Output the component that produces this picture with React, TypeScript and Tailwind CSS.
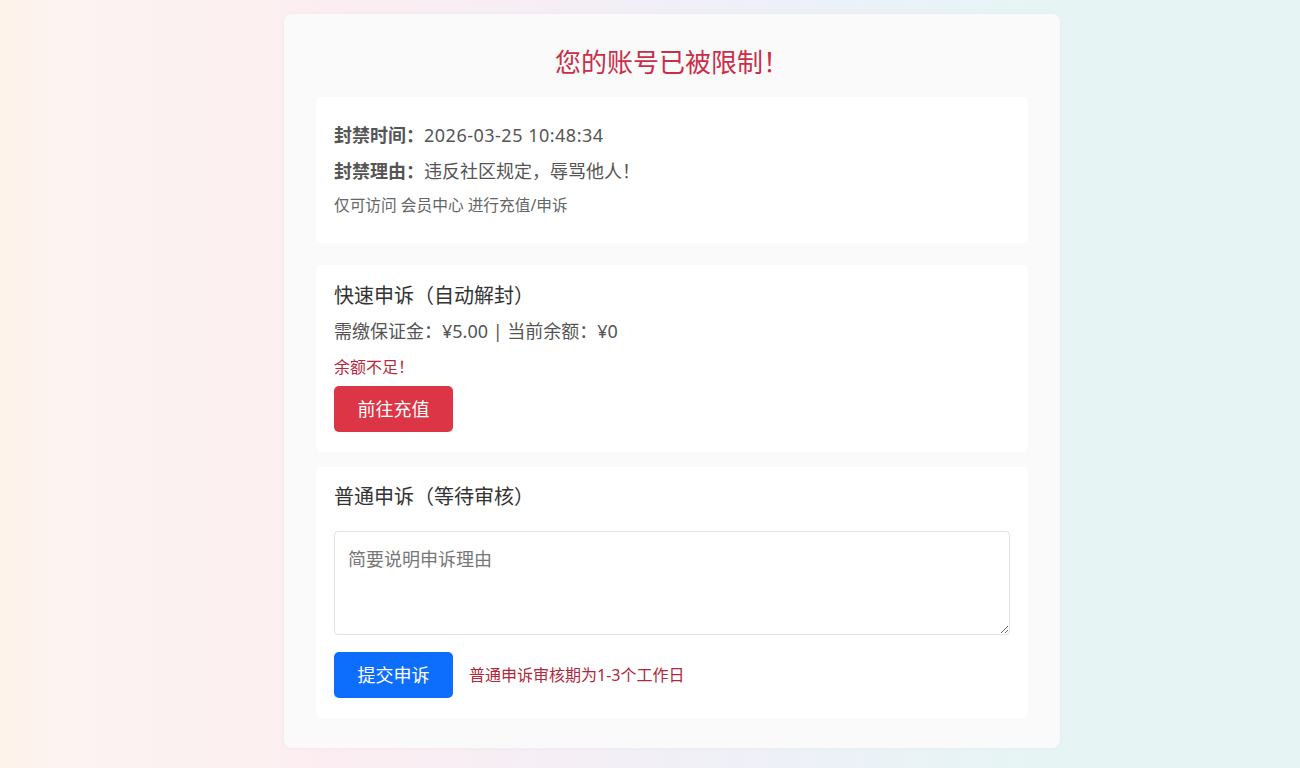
import React from "react";

export default function App() {
  const font = {
    fontFamily:
      '"Segoe UI", "Noto Sans", "Noto Sans CJK SC", "Microsoft YaHei", sans-serif',
  };
  return (
    <div
      className="min-h-[768px] w-full bg-[linear-gradient(to_right,#fef3ea_0%,#fdf3f2_6%,#fcf0f1_20%,#fcedf1_24%,#eef0f8_60%,#e6f5f4_80%,#e6f5f4_100%)] pt-[14px] pb-[20px]"
      style={font}
    >
      <div className="ml-[284px] w-[776px] rounded-lg bg-[#fafafa] px-[32px] pt-[28px] pb-[30px] shadow-[0_0_6px_rgba(0,0,0,0.03)]">
        <h1 className="mb-[15px] text-center text-[26px] leading-[40px] text-[#c8304a]">
          您的账号已被限制！
        </h1>

        <div className="mb-[22px] rounded-md bg-white px-[18px] pt-[20px] pb-[26px]">
          <div className="text-[18px] leading-[36px] text-[#555]">
            <span className="font-bold">封禁时间：</span>
            <span className="tracking-[0.5px]">2026-03-25 10:48:34</span>
          </div>
          <div className="text-[18px] leading-[36px] text-[#555]">
            <span className="font-bold">封禁理由：</span>违反社区规定，辱骂他人！
          </div>
          <div className="mt-[4px] text-[15.7px] leading-[24px] text-[#666]">
            仅可访问 会员中心 进行充值/申诉
          </div>
        </div>

        <div className="mb-[15px] rounded-md bg-white px-[18px] pt-[16px] pb-[20px]">
          <div className="mb-[2px] text-[20px] leading-[30px] text-[#333]">
            快速申诉（自动解封）
          </div>
          <div className="text-[18px] leading-[36px] text-[#555]">
            需缴保证金：¥5.00 | 当前余额：¥0
          </div>
          <div className="text-[16px] leading-[36px] text-[#b52a3c]">余额不足！</div>
          <button className="mt-[1px] flex h-[46px] w-[119px] items-center justify-center rounded-[5px] bg-[#dc3545] text-[18px] text-white">
            前往充值
          </button>
        </div>

        <div className="rounded-md bg-white px-[18px] pt-[15px] pb-[20px]">
          <div className="text-[20px] leading-[30px] text-[#333]">
            普通申诉（等待审核）
          </div>
          <textarea
            className="mt-[19px] block h-[104px] w-full rounded-[4px] border border-[#e3e3e3] bg-white px-[13px] py-[12px] text-[18px] leading-[30px] text-[#333] placeholder:text-[#777] outline-none"
            placeholder="简要说明申诉理由"
          />
          <div className="mt-[17px] flex items-center">
            <button className="flex h-[46px] w-[119px] items-center justify-center rounded-[5px] bg-[#0d6efd] text-[18px] text-white">
              提交申诉
            </button>
            <span className="ml-[16px] text-[16px] text-[#b0283a]">
              普通申诉审核期为1-3个工作日
            </span>
          </div>
        </div>
      </div>
    </div>
  );
}
